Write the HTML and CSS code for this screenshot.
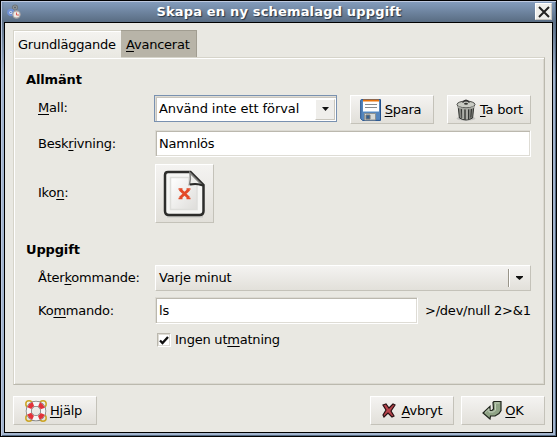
FILE: index.html
```html
<!DOCTYPE html>
<html lang="sv">
<head>
<meta charset="utf-8">
<title>Skapa en ny schemalagd uppgift</title>
<link rel="stylesheet" href="styles.css">
</head>
<body>
<div class="window">
  <header class="titlebar">
    <svg class="appicon" width="15" height="15" viewBox="0 0 15 15">
      <circle cx="8" cy="3.5" r="2.5" fill="#9aa0a4" stroke="#70777c" stroke-width="1.2"/><circle cx="8" cy="3.5" r="1" fill="#555e68"/>
      <circle cx="3.8" cy="8.5" r="2.600" fill="#dfe6f4" stroke="#6f90d4" stroke-width="2.200"/><circle cx="3.8" cy="8.5" r=".8" fill="#5779bc"/>
      <circle cx="9.500" cy="10.500" r="3.6" fill="#eee9e5" stroke="#aaa6a5" stroke-width="1.2"/><path d="M9.500 8.500v2.500h2.500" fill="none" stroke="#dd5a54"/>
    </svg>
    <h1>Skapa en ny schemalagd uppgift</h1>
    <button class="close"><svg width="12" height="12" viewBox="0 0 12 12"><path d="M1 1l10 10M11 1L1 11" stroke="#222" stroke-width="2"/></svg></button>
  </header>
  <main class="content">
    <nav class="tabs"><div class="tab active">Grundläggande</div><div class="tab idle"><u>A</u>vancerat</div></nav>
    <section class="panel">
      <h2>Allmänt</h2>
      <div class="row r-mall"><label><u>M</u>all:</label>
        <div class="combo"><span>Använd inte ett förval</span><i class="drop"><svg width="7" height="4" viewBox="0 0 7 4"><path d="M0 0h7L3.5 4z" fill="#111"/></svg></i></div>
        <button class="btn spara">
          <svg width="22" height="22" viewBox="0 0 22 22"><path d="M.7 1.5Q.7.6 1.5.6h19v20.8H2.5L.7 19.5z" fill="#5586bd" stroke="#23518c"/><path d="M3 1h16v11H3z" fill="#fff"/><path d="M3 .5h16v2H3z" fill="#e9730b"/><path d="M5 5.5h12M5 8.5h12" stroke="#888c90"/><path d="M3 12.5h16" stroke="#a9c7e5"/><path d="M4.5 14.5h11v6.5h-11z" fill="#d7dad7" stroke="#8d9393"/><path d="M6 16h4v4H6z" fill="#37608d" stroke="#777"/></svg><span><u>S</u>para</span></button>
        <button class="btn bort">
          <svg width="22" height="22" viewBox="0 0 22 22"><ellipse cx="11" cy="19.5" rx="9.5" ry="2" fill="#aaa" opacity=".55"/><path d="M3 6l1.400 13q6.600 4 13.200 0L19 6z" fill="#858681" stroke="#333532"/><path d="M6.500 10l.5 9M10 10v10.500M13.500 10v10M16.500 10l-.7 8.500" stroke="#333532" stroke-width="1.100"/><path d="M8 10v10M12 10v10.500" stroke="#d2d3cc"/><ellipse cx="11" cy="5.500" rx="9" ry="3.400" fill="#c9cbc4" stroke="#464744"/><path d="M3 7q8 4.500 16 0v2q-8 3-16 0z" fill="#a6a8a2"/><path d="M7.500 3.500q3.500-4.500 7 0" fill="none" stroke="#333" stroke-width="1.300"/><ellipse cx="11" cy="4.800" rx="2" ry="1" fill="#343633"/></svg><span><u>T</u>a bort</span></button>
      </div>
      <div class="row r-desc"><label>Besk<u>r</u>ivning:</label><div class="entry">Namnlös</div></div>
      <div class="row r-icon"><label>Iko<u>n</u>:</label>
        <button class="iconbtn"><svg width="44" height="48" viewBox="0 0 44 48">
          <defs><linearGradient id="paper" x2="1" y2="1"><stop stop-color="#fff"/><stop offset="1" stop-color="#deddda"/></linearGradient></defs>
          <path d="M4 46.5h36" stroke="#aaa" stroke-width="2" opacity=".45"/>
          <path d="M5 2h22.500L40.500 15v26q0 4-4 4H6q-4 0-4-4V5q0-3 3-3z" fill="#f6f6f4" stroke="#2d2d2b" stroke-width="2.500"/>
          <path d="M7.500 7.500H26v7h8v25H7.500z" fill="url(#paper)" stroke="#dededb" stroke-width="1.500"/>
          <path d="M27 3q1 6-.5 11.500 7-1.500 13 1z" fill="#eeeeeb" stroke="#858582" stroke-width="1.500"/><path d="M27 14.500q7-1.500 13 1" fill="none" stroke="#282826" stroke-width="2"/>
          <path d="M17 19.500l9 8.500M26 19.500l-9 8.500" stroke="#e34927" stroke-width="3"/><path d="M15.500 19h4M23.500 19h4M15.500 28.500h4M23.500 28.500h4" stroke="#e34927" stroke-width="1.500"/>
        </svg></button></div>
      <h2 class="second">Uppgift</h2>
      <div class="row r-recur"><label>Åter<u>k</u>ommande:</label><div class="select"><span>Varje minut</span><i class="sep"></i><svg width="7" height="4" viewBox="0 0 7 4"><path d="M0 0h7v1L3.500 4 0 1z" fill="#111"/></svg></div></div>
      <div class="row r-cmd"><label>Ko<u>m</u>mando:</label><div class="entry">ls</div><span class="suffix">&gt;/dev/null 2&gt;&amp;1</span></div>
      <div class="check"><i class="box"><svg width="10" height="9" viewBox="0 0 10 9"><path d="M1 4.500L3.500 7 9 1" fill="none" stroke="#111" stroke-width="2.300"/></svg></i><span>Ingen ut<u>m</u>atning</span></div>
    </section>
    <footer>
      <button class="btn help"><svg width="22" height="22" viewBox="0 0 22 22"><g fill="none"><g stroke="#cba526" stroke-width="1.500"><circle cx="4" cy="4" r="3.200"/><circle cx="18" cy="4" r="3.200"/><circle cx="4" cy="18" r="3.200"/><circle cx="18" cy="18" r="3.200"/></g><circle cx="11" cy="11" r="7.300" stroke="#777" stroke-width="6"/><circle cx="11" cy="11" r="7.300" stroke="#f5f5f5" stroke-width="4.500"/><circle cx="11" cy="11" r="7.300" stroke="#e2333a" stroke-width="4.500" stroke-dasharray="5.700 5.767" stroke-dashoffset="-2.880"/></g></svg><span><u>H</u>jälp</span></button>
      <button class="btn cancel"><svg width="14" height="15" viewBox="0 0 14 15"><path d="M1 2l3-1 3 4 4-4 2 1-4 6 3 5-2 1-4-4-4 4-1-2 3-5z" fill="#b8434b" stroke="#291214" stroke-width="1.200"/></svg><span><u>A</u>vbryt</span></button>
      <button class="btn ok"><svg width="20" height="19" viewBox="0 0 20 19"><path d="M11 1.500l1-1h7v9l-2 3-4 2.500H8.500L8 18 1 12l7-6.500v4h2l1.500-1.500z" fill="#8fa385" stroke="#20251d" stroke-width="1.200"/><path d="M12.500 2h5M3 11.500l4-3.800v3.300h4.500l2-2V3" fill="none" stroke="#c4d0bd"/></svg><span><u>O</u>K</span></button>
    </footer>
  </main>
</div>
</body>
</html>
```
FILE: styles.css
```css
* { box-sizing: border-box; }
body { margin: 0; width: 557px; height: 437px; overflow: hidden; font: 13px/16px "DejaVu Sans", sans-serif; color: #000; letter-spacing: -.22px; }
button { font: inherit; letter-spacing: inherit; color: inherit; padding: 0; margin: 0; }
svg { display: block; flex: none; }
i { display: block; }
u { text-decoration: underline 1px; text-underline-offset: 2px; text-decoration-skip-ink: none; }
.window { height: 437px; border: 1px solid #000; padding: 1px 3px 3px; background: linear-gradient(#8098b7 0, #5c6f85 20px, #a3b5ce 75px, #a3b5ce 100%); box-shadow: inset 1px 1px #bdc9df, inset -1px -1px #546a83; }
.titlebar { height: 20px; display: grid; grid-template-columns: 20px 1fr 20px; background: linear-gradient(#839cbc, #596c82); }
.appicon { margin: 2px 0 0 3px; }
h1 { margin: 1px 0 0 1px; font-size: 13px; line-height: 17px; text-align: center; color: #fff; letter-spacing: .17px; text-shadow: 1px 1px 1px #293544; white-space: nowrap; }
.close { width: 17px; height: 17px; margin: 1px 0 0 2px; display: flex; align-items: center; justify-content: center; border: 1px solid #fff; border-right-color: #c5c3bd; border-bottom-color: #c5c3bd; background: #eeeeeb; }
.content { height: 411px; border: 1px solid #000; background: #e9e8e2; padding: 7px 7px 0 8px; }
.tabs { display: flex; height: 27px; }
.tab { height: 27px; padding: 6px 0 0 4px; }
.active { width: 108px; height: 28px; margin-bottom: -1px; position: relative; border: 1px solid #d6d4ca; border-width: 1px 0 0 1px; box-shadow: inset 1px 1px #fff; background: linear-gradient(#f4f3f0, #e9e8e2); }
.idle { width: 76px; padding-left: 5px; border: 1px solid #a19d91; border-width: 1px 1px 0 0; background: #b8b4a8; }
.panel { height: 328px; border: 1px solid; border-color: #d6d4ca #bbb9ae #bbb9ae #d6d4ca; box-shadow: inset 1px 1px #fff, inset -1px -1px #dbd9d1; padding: 14px 13px 0 12px; }
h2 { font-size: 13px; line-height: 16px; margin: 0; letter-spacing: -.15px; }
.row { display: flex; margin-left: 12px; }
label { width: 117px; flex: none; align-self: center; }
.r-mall { height: 29px; margin-top: 7px; align-items: start; }
.r-mall label { align-self: auto; margin-top: 5px; width: 116px; }
.combo { width: 183px; height: 27px; margin-right: 13px; display: flex; align-items: center; justify-content: space-between; border: 1px solid #7991b0; background: #fff; box-shadow: inset 1px 1px #dedcd5, inset 2px 2px #c9c5bd; padding: 2px 1px 1px 4px; letter-spacing: -.08px; }
.drop { width: 20px; height: 21px; display: flex; align-items: center; justify-content: center; background: #efeeeb; border: 1px solid #fff; border-right-color: #c9c6bd; border-bottom-color: #c9c6bd; }
.btn { width: 84px; height: 29px; flex: none; display: flex; align-items: center; justify-content: center; gap: 3px; border: 1px solid; border-color: #fff #c4c2b9 #c4c2b9 #fff; background: linear-gradient(#f4f3f1, #e2e0da); }
.spara { padding-right: 3px; }
.bort { margin-left: 13px; }
.entry { height: 27px; flex: 1; border: 1px solid; border-color: #dcdad3 #fff #fff #dcdad3; background: #fff; box-shadow: inset 1px 1px #bbb8ae, inset -1px -1px #dedcd5; padding: 5px 0 0 3px; }
.r-desc { margin-top: 6px; }
.r-icon { margin-top: 7px; }
.r-icon label { padding-bottom: 2px; }
.iconbtn { width: 59px; height: 59px; display: flex; align-items: center; justify-content: center; border: 1px solid; border-color: #fff #c4c2b9 #c4c2b9 #fff; background: linear-gradient(#f4f3f1, #e2e0da); }
.second { margin-top: 19px; }
.r-recur { margin-top: 7px; }
.select { flex: 1; height: 26px; display: flex; align-items: center; padding: 0 7px 0 3px; border: 1px solid; border-color: #fff #c4c2b9 #c4c2b9 #fff; background: linear-gradient(#f4f3f1, #e2e0da); }
.sep { width: 2px; height: 18px; margin: 0 6px 0 auto; border-left: 1px solid #999589; border-right: 1px solid #fff; }
.r-cmd { margin-top: 6px; align-items: center; }
.suffix { width: 106px; margin-left: 7px; white-space: nowrap; }
.check { display: flex; align-items: center; margin: 8px 0 0 131px; gap: 4px; }
.box { width: 14px; height: 14px; display: flex; align-items: center; justify-content: center; background: #fff; border: 1px solid; border-color: #bbb8ae #fff #fff #bbb8ae; box-shadow: inset -1px -1px #dedcd5, inset 1px 1px #dedcd5; }
footer { display: flex; margin-top: 11px; gap: 7px; }
.help { margin-right: auto; padding-right: 3px; }
.cancel { gap: 6px; }
.ok { gap: 3px; }
```
